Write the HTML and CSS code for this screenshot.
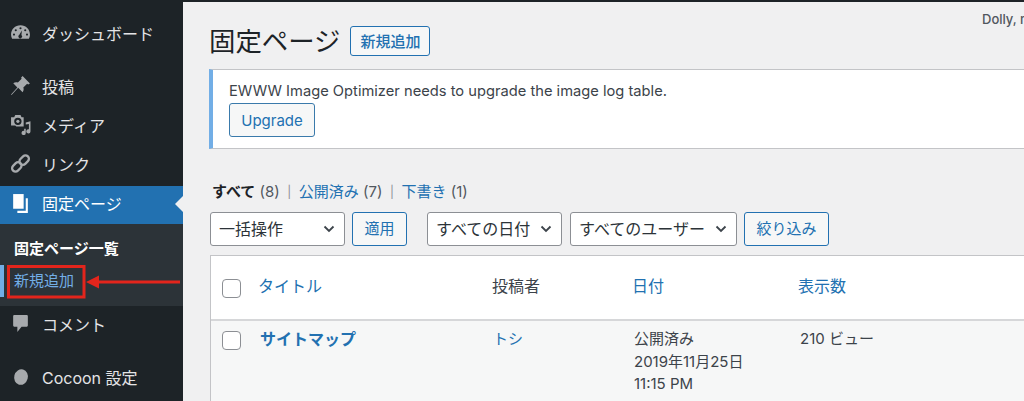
FILE: index.html
```html
<!DOCTYPE html>
<html lang="ja">
<head>
<meta charset="utf-8">
<title>固定ページ</title>
<link rel="stylesheet" href="styles.css">
</head>
<body>
<div class="topbar"></div>
<div class="shell">
  <aside class="sidebar">
    <nav class="menu">
      <a class="item first">
        <svg class="ico" viewBox="0 0 20 20"><path fill-rule="evenodd" d="M10 3.200C4.800 3.200 1 7.200 1 12c0 1.500.4 2.900 1 4h16c.6-1.100 1-2.500 1-4 0-4.800-3.800-8.800-9-8.800zM10 5a1 1 0 1 1 0 2 1 1 0 0 1 0-2zM5.500 6.800a1 1 0 1 1 0 2 1 1 0 0 1 0-2zM14.500 6.800a1 1 0 1 1 0 2 1 1 0 0 1 0-2zM3.800 11a1 1 0 1 1 0 2 1 1 0 0 1 0-2zM16.200 11a1 1 0 1 1 0 2 1 1 0 0 1 0-2zM11.300 8l-.4 4.300a1.800 1.800 0 1 1-2-.2z"/></svg>
        <span>ダッシュボード</span>
      </a>
      <a class="item gap">
        <svg class="ico" viewBox="0 0 20 20"><path d="M12 1l7 7-1.700 1-1-.6-3.600 3.600c.6 1.500.3 3.200-.7 4.400L7.800 12.200 1.500 19l-.5-.5 6-6.700-3.900-3.900c1.200-1 2.900-1.300 4.400-.7l3.600-3.600-.6-1z"/></svg>
        <span>投稿</span>
      </a>
      <a class="item">
        <svg class="ico" viewBox="0 0 20 20"><path fill-rule="evenodd" d="M1 3h3l1-2h5l1 2h2v9H6l-1-1H1zM7.500 3.500a3.500 3.500 0 1 0 0 7 3.500 3.500 0 0 0 0-7z"/><circle cx="7.500" cy="7" r="1.500"/><path d="M19.500 7v9.500a2 2 0 1 1-1.500-1.900V9.500l-3 .6v7.900a2 2 0 1 1-1.500-1.900V14h1.500V8z"/></svg>
        <span>メディア</span>
      </a>
      <a class="item">
        <svg class="ico" viewBox="0 0 20 20"><g fill="none" stroke="currentColor" stroke-width="2.200"><rect x="8.500" y="3.500" width="10" height="6.500" rx="3.200" transform="rotate(-45 13.500 6.750)"/><rect x="1.500" y="10" width="10" height="6.500" rx="3.200" transform="rotate(-45 6.500 13.250)"/></g></svg>
        <span>リンク</span>
      </a>
      <a class="item active">
        <svg class="ico" viewBox="0 0 20 20"><path d="M3 1h10v14H3z"/><path d="M15 5h2v14H7v-2h8z"/></svg>
        <span>固定ページ</span>
      </a>
      <div class="submenu">
        <a class="sub-current">固定ページ一覧</a>
        <a class="sub-new">新規追加</a>
      </div>
      <a class="item comment">
        <svg class="ico" viewBox="0 0 20 20"><path d="M4 2h12a1 1 0 0 1 1 1v9a1 1 0 0 1-1 1h-5l-4 5v-5H4a1 1 0 0 1-1-1V3a1 1 0 0 1 1-1z"/></svg>
        <span>コメント</span>
      </a>
      <a class="item cocoon">
        <svg class="ico" viewBox="0 0 20 20"><ellipse cx="10.500" cy="10.500" rx="6.500" ry="7.500" transform="rotate(15 10.500 10.500)"/></svg>
        <span>Cocoon 設定</span>
      </a>
    </nav>
    <svg class="marker" viewBox="0 0 183 40" aria-hidden="true">
      <rect x="8.500" y="2.500" width="75.500" height="30.500" fill="none" stroke="#e3251c" stroke-width="3"/>
      <path d="M86 18l13-6.500v5h81v3H99v5z" fill="#e3251c"/>
    </svg>
  </aside>
  <main class="main">
    <div class="greeting">Dolly, make your own luck today</div>
    <header class="heading">
      <h1>固定ページ</h1>
      <a class="btn btn-add">新規追加</a>
    </header>
    <section class="notice">
      <p>EWWW Image Optimizer needs to upgrade the image log table.</p>
      <a class="btn btn-upgrade">Upgrade</a>
    </section>
    <ul class="views">
      <li><b>すべて</b> <i>(8)</i></li>
      <li class="sep">|</li>
      <li><a>公開済み</a> <i>(7)</i></li>
      <li class="sep">|</li>
      <li><a>下書き</a> <i>(1)</i></li>
    </ul>
    <div class="filters">
      <div class="select w-bulk"><span>一括操作</span><svg viewBox="0 0 12 8"><path d="M1.500 1.500L6 6l4.500-4.500"/></svg></div>
      <a class="btn w-apply">適用</a>
      <div class="select w-date"><span>すべての日付</span><svg viewBox="0 0 12 8"><path d="M1.500 1.500L6 6l4.500-4.500"/></svg></div>
      <div class="select w-user"><span>すべてのユーザー</span><svg viewBox="0 0 12 8"><path d="M1.500 1.500L6 6l4.500-4.500"/></svg></div>
      <a class="btn w-filter">絞り込み</a>
    </div>
    <div class="table">
      <div class="row head">
        <span class="check"></span>
        <a class="c-title">タイトル</a>
        <span class="c-author">投稿者</span>
        <a class="c-date">日付</a>
        <a class="c-views">表示数</a>
      </div>
      <div class="row body">
        <span class="check"></span>
        <a class="c-title strong">サイトマップ</a>
        <a class="c-author shift">トシ</a>
        <div class="c-date shift stack"><span>公開済み</span><span>2019年11月25日</span><span>11:15 PM</span></div>
        <span class="c-views shift">210 ビュー</span>
      </div>
    </div>
  </main>
</div>
</body>
</html>
```
FILE: styles.css
```css
* { box-sizing: border-box; }
html, body { margin: 0; height: 401px; overflow: hidden; }
body {
  background: #f0f0f1;
  color: #3c434a;
  font-family: Inter, "Noto Sans CJK JP", sans-serif;
  font-size: 14px;
}
.topbar { height: 2px; background: #1d2327; }
.shell { display: flex; height: 399px; }

.sidebar { position: relative; width: 183px; flex: none; background: #1d2327; color: #dcdcde; }
.menu { display: flex; flex-direction: column; padding-top: 13px; }
.item { display: flex; align-items: center; height: 39px; padding: 0 0 4px 10px; gap: 11px; font-size: 16px; color: #e4e4e6; }
.item.gap { margin-top: 14px; }
.ico { width: 21px; height: 21px; fill: #a7aaad; color: #a7aaad; flex: none; }
.item.active { position: relative; background: #2271b1; color: #fff; height: 38px; margin-top: 1px; }
.item.active .ico { fill: #fff; }
.item.active::after {
  content: ""; position: absolute; right: 0; top: 10px;
  border: 8px solid transparent; border-right-color: #f0f0f1; border-left-width: 0;
}
.submenu { display: flex; flex-direction: column; height: 82px; background: #2c3338; padding: 15px 0 0 14px; position: relative; }
.sub-current { font-size: 15px; font-weight: 700; color: #fff; line-height: 20px; }
.sub-new { font-size: 15px; color: #72aee6; line-height: 20px; margin-top: 12px; }
.submenu::before { content: ""; position: absolute; left: 0; top: 41px; width: 4px; height: 32px; background: #72aee6; }
.cocoon { margin-top: 14px; }
.marker { position: absolute; left: 0; top: 262px; width: 183px; height: 40px; }

.main { position: relative; flex: 1; min-width: 0; padding: 24px 0 0 27px; }
.greeting { position: absolute; left: 799px; top: 9px; font-size: 13px; font-weight: 500; white-space: nowrap; color: #50575e; }
.heading { display: flex; align-items: center; gap: 10px; height: 30px; }
h1 { margin: 0 0 0 -1px; font-size: 26.400px; font-weight: 400; line-height: 30px; color: #1d2327; }
.btn {
  display: inline-flex; align-items: center; justify-content: center;
  border: 1px solid #2271b1; border-radius: 3px; background: #f6f7f7; color: #2271b1;
}
.btn-add { width: 80px; height: 30px; padding-bottom: 1px; font-size: 15px; font-weight: 500; }
.notice {
  margin: 13px 0 0 -1px; height: 80px; padding: 11px 0 0 16px;
  background: #fff; border: 1px solid #c3c4c7; border-left: 4px solid #72aee6; border-right: 0;
}
.notice p { margin: 0; font-size: 14.700px; line-height: 20px; color: #3c434a; }
.btn-upgrade { width: 86px; height: 34px; margin-top: 2px; font-size: 15px; border-color: #3a7aab; }

.views { display: flex; gap: 7.500px; list-style: none; margin: 33px 0 0 2px; padding: 0; height: 20px; line-height: 20px; font-size: 15px; }
.views b { color: #1d2327; }
.views i { font-style: normal; color: #50575e; }
.views a { color: #2271b1; }
.views .sep { color: #8c8f94; font-size: 12px; }

.filters { display: flex; margin-top: 10px; height: 34px; }
.select {
  display: flex; align-items: center; justify-content: space-between;
  background: #fff; border: 1px solid #8c8f94; border-radius: 3px; padding: 0 9px 3px 8px; font-size: 16px; color: #2c3338;
}
.select svg { width: 12px; height: 8px; margin-top: 3px; fill: none; stroke: #3c434a; stroke-width: 1.800; flex: none; }
.w-bulk { width: 135px; }
.w-apply { width: 55px; margin-left: 7px; padding-bottom: 3px; font-size: 15px; }
.w-date { width: 135px; margin-left: 20px; }
.w-user { width: 167px; margin-left: 8px; }
.w-filter { width: 85px; margin-left: 7px; padding-bottom: 3px; font-size: 15px; }

.table { margin-top: 9px; background: #fff; border: 1px solid #c3c4c7; border-right: 0; border-bottom: 0; }
.row { display: grid; grid-template-columns: 47px 234px 140px 166px 1fr; }
.head { height: 65px; padding-bottom: 6px; align-items: center; border-bottom: 2px solid #d6d7d9; font-size: 16px; }
.head a { color: #2271b1; }
.body { height: 90px; background: #f6f7f7; padding-top: 7px; align-items: start; font-size: 15px; }
.check { width: 19px; height: 19px; margin-left: 11px; border: 1px solid #8c8f94; border-radius: 4px; background: #fff; }
.head .check { margin-top: 7px; }
.body .check { margin-top: 3px; }
.strong { font-size: 16px; font-weight: 700; color: #2271b1; margin-left: 2px; line-height: 22px; }
.shift { margin-left: 1px; line-height: 22px; }
.c-date.shift { margin-left: 2px; line-height: 22.500px; }
.c-views.shift { margin-left: 2px; }
a.shift { color: #2271b1; }
.stack { display: flex; flex-direction: column; }
```
